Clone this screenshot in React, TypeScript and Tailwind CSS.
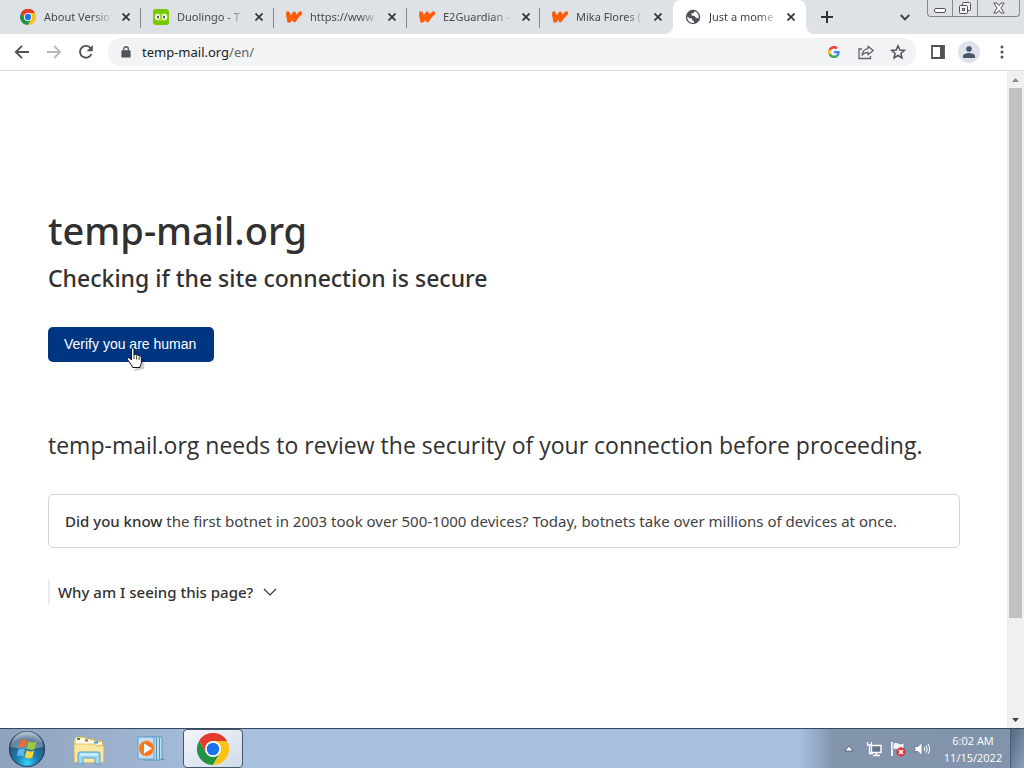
import React from "react";

const ui = "font-['Noto_Sans','Open_Sans',sans-serif]";

function ChromeLogo({ className }: { className: string }) {
  return (
    <svg viewBox="0 0 48 48" className={className} aria-hidden="true">
      <path d="M24 24 3.2 12A24 24 0 0 1 44.8 12Z" fill="#e33b2e" />
      <path d="M3.2 12A24 24 0 0 0 24 48L34.4 30 24 24 13.6 30Z" fill="#229342" />
      <path d="M44.8 12A24 24 0 0 1 24 48L34.4 30 24 12Z" fill="#fbc116" />
      <path d="M3.2 12A24 24 0 0 1 44.8 12H24L13.6 30Z" fill="#e33b2e" />
      <circle cx="24" cy="24" r="12" fill="#fff" />
      <circle cx="24" cy="24" r="9.4" fill="#1a73e8" />
    </svg>
  );
}

function DuoLogo() {
  return (
    <svg viewBox="0 0 16 16" className="size-4 shrink-0" aria-hidden="true">
      <rect width="16" height="16" rx="3" fill="#78c800" />
      <rect x="1" y="4" width="14" height="8" rx="4" fill="#8fdc1c" />
      <ellipse cx="4.6" cy="8" rx="2.5" ry="2.9" fill="#fff" />
      <ellipse cx="11.4" cy="8" rx="2.5" ry="2.9" fill="#fff" />
      <ellipse cx="5" cy="8" rx="1" ry="1.6" fill="#4b4b4b" />
      <ellipse cx="11" cy="8" rx="1" ry="1.6" fill="#4b4b4b" />
      <path d="M6.500 10h3L8 12Z" fill="#ffc200" />
    </svg>
  );
}

function WattpadLogo() {
  return (
    <svg viewBox="0 0 16 16" className="size-4 shrink-0" aria-hidden="true">
      <path d="M2 4.200 3 11.800 8.200 4.600 8.400 11.400Q11 6.800 14.300 4.200" fill="none" stroke="#ff5c0a" strokeWidth="3.800" strokeLinecap="round" strokeLinejoin="round" />
      <path d="M2.200 5.500 3.600 11" stroke="#ff5c0a" strokeWidth="4.200" strokeLinecap="round" />
    </svg>
  );
}

function GlobeLogo() {
  return (
    <svg viewBox="0 0 16 16" className="size-4 shrink-0" aria-hidden="true">
      <circle cx="8" cy="8" r="7.2" fill="#4d5156" />
      <path d="M2.2 7.4 4.5 9.2 7 9.6 7.4 11.6 9 12 8.6 14A6 6 0 0 1 2.2 7.4ZM9.5 2.2 8.6 4 6.4 4.6 6.6 6.6 9.6 7 11 8.8 13.6 9.4A6 6 0 0 0 9.5 2.2Z" fill="#fff" />
    </svg>
  );
}

const tabs: { title: string; icon: React.ReactNode; active?: boolean }[] = [
  { title: "About Versio", icon: <ChromeLogo className="size-4 shrink-0" /> },
  { title: "Duolingo - T", icon: <DuoLogo /> },
  { title: "https://www", icon: <WattpadLogo /> },
  { title: "E2Guardian -", icon: <WattpadLogo /> },
  { title: "Mika Flores (", icon: <WattpadLogo /> },
  { title: "Just a mome", icon: <GlobeLogo />, active: true },
];

function Tab({ title, icon, active, last }: { title: string; icon: React.ReactNode; active?: boolean; last: boolean }) {
  return (
    <div
      className={
        "relative flex w-[133px] shrink-0 items-center gap-2 pl-3 pr-[7px] " +
        (active ? "rounded-t-lg bg-white" : "")
      }
    >
      {icon}
      <span
        className={
          "flex-1 whitespace-nowrap text-[11px] [mask-image:linear-gradient(to_right,black_75%,transparent_105%)] " +
          (active ? "text-[#3c4043]" : "text-[#45494e]")
        }
      >
        {title}
      </span>
      <button type="button" aria-label="Close tab" className="flex size-4 shrink-0 items-center justify-center">
        <svg viewBox="0 0 8 8" className="size-2">
          <path d="M.5.5l7 7M7.5.5l-7 7" stroke="#2f3337" strokeWidth="1.7" />
        </svg>
      </button>
      {!active && !last && <span className="absolute right-0 top-2 h-5 w-px bg-[#80868b]" />}
      {active && (
        <>
          <svg viewBox="0 0 8 8" className="absolute -left-2 bottom-0 size-2" aria-hidden="true">
            <path d="M8 0v8H0A8 8 0 0 0 8 0Z" fill="#fff" />
          </svg>
          <svg viewBox="0 0 8 8" className="absolute -right-2 bottom-0 size-2" aria-hidden="true">
            <path d="M0 0v8h8A8 8 0 0 1 0 0Z" fill="#fff" />
          </svg>
        </>
      )}
    </div>
  );
}

function TabStrip() {
  return (
    <header className="flex h-[34px] shrink-0 bg-[#dee1e6] pl-2">
      {tabs.map((t, i) => (
        <Tab key={t.title} {...t} last={i === tabs.length - 2} />
      ))}
      <button type="button" aria-label="New tab" className="ml-[11px] flex w-5 items-center justify-center">
        <svg viewBox="0 0 12 12" className="size-3">
          <path d="M6 0v12M0 6h12" stroke="#2f3337" strokeWidth="2" />
        </svg>
      </button>
      <button type="button" aria-label="Search tabs" className="ml-auto mr-3 flex w-5 items-center justify-center">
        <svg viewBox="0 0 10 7" className="h-[7px] w-[10px]">
          <path d="M.8 1 5 5.3 9.200 1" fill="none" stroke="#3c4043" strokeWidth="1.9" />
        </svg>
      </button>
      <div className="mr-1 flex h-[17px] w-[93px] rounded-b border border-t-0 border-[#84888d] bg-[#dee1e6]">
        <button type="button" aria-label="Minimize" className="flex w-[25px] items-center justify-center border-r border-[#84888d]">
          <svg viewBox="0 0 12 12" className="size-3">
            <rect x=".5" y="6.500" width="11" height="4" rx="1.500" fill="#fff" stroke="#50545a" />
          </svg>
        </button>
        <button type="button" aria-label="Restore" className="flex w-[25px] items-center justify-center border-r border-[#84888d]">
          <svg viewBox="0 0 14 14" className="size-3.5" fill="#f1f2f4" stroke="#50545a">
            <rect x="4.500" y="1.500" width="8" height="8" rx="1" />
            <rect x="1.500" y="4.500" width="8" height="8" rx="1" />
            <rect x="4.500" y="7.500" width="2" height="2" />
          </svg>
        </button>
        <button type="button" aria-label="Close" className="flex flex-1 items-center justify-center">
          <svg viewBox="0 0 12 12" className="size-3">
            <path d="M.8 1H4L6 3.700 8 1h3.200L7.900 6l3.300 5H8L6 8.300 4 11H.8L4.100 6Z" fill="#fff" stroke="#50545a" />
          </svg>
        </button>
      </div>
    </header>
  );
}

function Toolbar() {
  return (
    <div className="flex h-[37px] shrink-0 items-center border-b border-[#d8dade] bg-white pl-3 pr-3">
      <div className="flex items-center gap-3">
        <button type="button" aria-label="Back" className="flex size-5 items-center justify-center">
          <svg viewBox="0 0 16 16" className="size-4">
            <path d="M15 8H2M8 1.800 1.800 8 8 14.200" fill="none" stroke="#505357" strokeWidth="1.900" />
          </svg>
        </button>
        <button type="button" aria-label="Forward" className="flex size-5 items-center justify-center">
          <svg viewBox="0 0 16 16" className="size-4">
            <path d="M1 8h13M8 1.800 14.200 8 8 14.200" fill="none" stroke="#b5b7ba" strokeWidth="1.900" />
          </svg>
        </button>
        <button type="button" aria-label="Reload" className="flex size-5 items-center justify-center">
          <svg viewBox="0 0 16 16" className="size-4">
            <path d="M13.400 10A5.900 5.900 0 1 1 12.600 4.200L13.500 5.500" fill="none" stroke="#505357" strokeWidth="1.900" />
            <path d="M14.800 1v6.200H8.600Z" fill="#505357" />
          </svg>
        </button>
      </div>
      <div className="ml-3 flex h-7 flex-1 items-center rounded-full bg-[#f1f3f4] pl-[13px] pr-[10px]">
        <svg viewBox="0 0 10 13" className="h-3 w-[10px]" aria-hidden="true">
          <rect x="0" y="4.500" width="10" height="8" rx="1" fill="#505357" />
          <path d="M2.500 5V3.300a2.500 2.500 0 0 1 5 0V5" fill="none" stroke="#505357" strokeWidth="1.400" />
        </svg>
        <p className="ml-[11px] flex-1 pt-px text-[13px] text-[#202124]">
          temp-mail.org<span className="text-[#5f6368]">/en/</span>
        </p>
        <div className="flex items-center gap-4">
          <button type="button" aria-label="Google" className="size-4">
            <svg viewBox="0 0 48 48" className="size-4 p-[2px]">
              <path fill="#4285f4" d="M46.500 24.500c0-1.600-.2-3.200-.4-4.700H24V29h12.700c-.6 3-2.300 5.500-4.800 7.100l7.700 6c4.500-4.200 6.900-10.300 6.900-17.600Z" />
              <path fill="#34a853" d="M24 48c6.500 0 11.900-2.100 15.600-5.900l-7.700-6c-2.100 1.500-4.900 2.300-7.900 2.300-6.300 0-11.600-4.200-13.500-9.900l-7.900 6.100C6.500 42.600 14.600 48 24 48Z" />
              <path fill="#fbbc05" d="M10.500 28.600a14.500 14.500 0 0 1 0-9.200l-7.900-6.100a24 24 0 0 0 0 21.500Z" />
              <path fill="#ea4335" d="M24 9.500c3.500 0 6.700 1.200 9.200 3.600l6.800-6.800C35.900 2.400 30.500 0 24 0 14.600 0 6.500 5.400 2.600 13.300l7.900 6.100C12.400 13.700 17.700 9.500 24 9.500Z" />
            </svg>
          </button>
          <button type="button" aria-label="Share" className="size-4">
            <svg viewBox="0 0 16 16" className="size-4" fill="none" stroke="#606368" strokeWidth="1.300">
              <path d="M4 5H1v9.500h11.500V12" />
              <path d="M10 2.200 15.200 6.500 10 10.800V8.300C7.500 8.300 5.500 9 4 11.200 4.400 7.600 6.500 5 10 4.600Z" strokeLinejoin="round" />
            </svg>
          </button>
          <button type="button" aria-label="Bookmark" className="size-4">
            <svg viewBox="0 0 16 16" className="size-4">
              <path d="M8 1.800 9.800 6l4.600.4-3.500 3L12 14 8 11.500 4 14l1.100-4.600-3.500-3L6.200 6Z" fill="none" stroke="#505357" strokeWidth="1.500" />
            </svg>
          </button>
        </div>
      </div>
      <div className="ml-3.5 flex items-center gap-3">
        <button type="button" aria-label="Side panel" className="flex size-4 items-center justify-center">
          <svg viewBox="0 0 14 14" className="size-3.5">
            <path d="M1 1h12v12H1Z" fill="none" stroke="#505357" strokeWidth="1.800" />
            <path d="M9 1h4v12H9Z" fill="#505357" />
          </svg>
        </button>
        <button type="button" aria-label="Profile" className="flex size-[22px] items-center justify-center rounded-full bg-[#dfe2ea]">
          <svg viewBox="0 0 12 12" className="size-3">
            <circle cx="6" cy="3" r="2.800" fill="#48566a" />
            <path d="M0 12V10C0 8 3.500 7 6 7s6 1 6 3v2Z" fill="#48566a" />
          </svg>
        </button>
        <button type="button" aria-label="Menu" className="flex size-5 items-center justify-center">
          <svg viewBox="0 0 4 14" className="h-3.5 w-1" fill="#505357">
            <circle cx="2" cy="2" r="1.500" />
            <circle cx="2" cy="7" r="1.500" />
            <circle cx="2" cy="12" r="1.500" />
          </svg>
        </button>
      </div>
    </div>
  );
}

function HandCursor() {
  return (
    <svg viewBox="0 0 20 25" className="absolute left-[78px] top-5 h-[25px] w-5" aria-hidden="true">
      <path d="M8 24 18 22 18.500 12 15 11Z" fill="#00000030" />
      <path
        d="M5.500 2c0-1.600 2.500-1.600 2.500 0v6c.8-1 2.400-.7 2.600.3.900-.6 2.200-.2 2.500.8 1-.4 2.300.2 2.300 1.600V15c0 2.500-1.400 3.500-1.400 5.500H6.500c0-2-3-4.500-5-8-.8-1.600 1-2.500 2.300-1.200L5.500 13Z"
        fill="#fff"
        stroke="#111"
      />
      <path d="M8 8v4M10.600 9v3.500M13.100 10v3" stroke="#111" strokeWidth=".8" />
    </svg>
  );
}

function Page() {
  return (
    <main className="min-w-0 flex-1 pl-12 pr-[47px] pt-[129px] text-[#313131]">
      <h1 className="text-[38px] font-medium leading-[60px]">temp-mail.org</h1>
      <h2 className="text-[23px] font-medium leading-9">Checking if the site connection is secure</h2>
      <div className="relative mt-[31px] w-fit">
        <button type="button" className="block h-[35px] rounded-[5px] bg-[#003681] pb-px pl-4 pr-[18px] font-['Liberation_Sans',Arial,sans-serif] text-sm text-white">
          Verify you are human
        </button>
        <HandCursor />
      </div>
      <p className="mt-[65px] font-['Open_Sans','Noto_Sans',sans-serif] text-[23px] leading-9">
        temp-mail.org needs to review the security of your connection before proceeding.
      </p>
      <p className="mt-[31px] rounded-[5px] border border-[#d5d5d5] p-4 text-[15px] leading-5 text-[#414141]">
        <span className="font-medium text-[#313131]">Did you know</span> the first botnet in 2003 took over 500-1000 devices? Today, botnets take over millions of devices at once.
      </p>
      <div className="mt-8 flex border-l-2 border-[#ebebeb] pl-2">
        <button type="button" className="flex items-center gap-2.5 text-[15px] font-medium leading-6">
          Why am I seeing this page?
          <svg viewBox="0 0 14 8" className="h-2 w-3.5" aria-hidden="true">
            <path d="M1 1l6 6 6-6" fill="none" stroke="#313131" strokeWidth="1.200" />
          </svg>
        </button>
      </div>
    </main>
  );
}

function Scrollbar() {
  return (
    <div className="flex w-[17px] shrink-0 flex-col bg-[#f0f0f0]" aria-hidden="true">
      <div className="flex h-[17px] items-center justify-center">
        <svg viewBox="0 0 7 4" className="h-1 w-[7px]"><path d="M0 4h7L3.500 0Z" fill="#8c8c8c" /></svg>
      </div>
      <div className="flex-1 px-0.5">
        <div className="h-[530px] bg-[#c1c1c1]" />
      </div>
      <div className="flex h-[17px] items-center justify-center">
        <svg viewBox="0 0 7 4" className="h-1 w-[7px]"><path d="M0 0h7L3.500 4Z" fill="#404040" /></svg>
      </div>
    </div>
  );
}

function StartOrb() {
  return (
    <svg viewBox="0 0 38 38" className="size-[38px]" aria-hidden="true">
      <defs>
        <radialGradient id="orb" cx=".5" cy=".9" r=".9">
          <stop offset="0" stopColor="#35d3f5" />
          <stop offset=".35" stopColor="#1b7fb0" />
          <stop offset=".75" stopColor="#2c5378" />
          <stop offset="1" stopColor="#a9bac9" />
        </radialGradient>
      </defs>
      <circle cx="19" cy="19" r="17.500" fill="url(#orb)" stroke="#25435f" strokeWidth="1.200" />
      <path d="M3 17A16 16 0 0 1 35 17Q19 21 3 17Z" fill="#ffffff48" />
      <path d="M12.500 11Q16 8.500 19 10.500L17.400 18Q14 16 10.700 18Z" fill="#ef6a32" />
      <path d="M20.500 11.200Q25 13.500 28.500 11.500L26.600 19Q23 21 18.900 18.600Z" fill="#9bca3c" />
      <path d="M10.300 19.500Q13.500 17.800 17 19.500L15.300 26.500Q12 24.500 8.800 26.500Z" fill="#62b6ea" />
      <path d="M18.500 20.200Q22.500 22.500 26.200 20.600L24.400 27.500Q20.500 29.500 16.800 27.300Z" fill="#fbd33f" />
    </svg>
  );
}

function FolderIcon() {
  return (
    <svg viewBox="0 0 34 30" className="h-[30px] w-[34px]" aria-hidden="true">
      <path d="M2 4 4 1h9l2 2h7l1 2h7l1 3v18H2Z" fill="#f0dc8e" stroke="#c9b05c" strokeWidth=".8" />
      <path d="M4 2h8v1.500h6V5h6v1.500h6v2H4Z" fill="#fffdf0" />
      <path d="M5 2h3v2H5Z" fill="#3a9d45" />
      <path d="M13 3.500h3v2h-3Z" fill="#d4553a" />
      <path d="M22 5.500h4v2h-4Z" fill="#4a93cf" />
      <path d="M2 8h20l2 2h8l-.5 16.500h-29Z" fill="#f8e9a2" stroke="#d3b963" strokeWidth=".8" />
      <path d="M6 28V18q0-2 2-2h18q2 0 2 2v10h-5v-6H11v6Z" fill="#9fd7f2" stroke="#5a9fc9" />
      <path d="M8 18.500h18" stroke="#e4f7ff" strokeWidth="1.500" />
    </svg>
  );
}

function MediaIcon() {
  return (
    <svg viewBox="0 0 28 26" className="h-[26px] w-7" aria-hidden="true">
      <path d="M20 24h8l-3-3Z" fill="#6f93b8" />
      <path d="M7 1h18v21l-2 2H7Z" fill="#b9ddf1" stroke="#5b9ac4" />
      <path d="M22.500 1.500v22M19.500 1.500v22" stroke="#4f92bf" />
      <path d="M1 1h16v22H1Z" fill="#c3e1f2" stroke="#5a9cc6" />
      <circle cx="9.500" cy="12.500" r="7.800" fill="#ee7a22" stroke="#f7b57c" />
      <path d="M7 7.500v10l8-5Z" fill="#fff" />
    </svg>
  );
}

function Taskbar() {
  return (
    <footer className="flex h-10 shrink-0 items-stretch border-t border-[#37485c] bg-linear-to-r from-[#8fa2bd] from-0% via-[#a7c0de] via-22% to-[#a7c0de] to-72%">
      <button type="button" aria-label="Start" className="ml-2 flex items-center"><StartOrb /></button>
      <button type="button" aria-label="Windows Explorer" className="ml-[26px] flex items-center pt-1"><FolderIcon /></button>
      <button type="button" aria-label="Media Player" className="ml-[31px] flex items-center"><MediaIcon /></button>
      <button type="button" aria-label="Google Chrome" className="ml-[18px] flex w-[60px] items-center justify-center rounded-sm border border-[#48586c] bg-linear-to-br from-[#f4f6f9] to-[#d0dbea]">
        <ChromeLogo className="size-8" />
      </button>
      <div className="ml-auto flex items-center gap-2 bg-linear-to-r from-[#a7c0de] from-0% via-[#8395ad] via-16% to-[#8194ac] pl-[44px] text-white">
        <button type="button" aria-label="Show hidden icons" className="mr-1 flex h-4 items-center">
          <svg viewBox="0 0 10 7" className="h-[7px] w-[10px]"><path d="M.8 6h8.400L5 1Z" fill="#fff" stroke="#44566f" strokeWidth=".8" /></svg>
        </button>
        <svg viewBox="0 0 16 16" className="size-4" aria-label="Network">
          <path d="M5.500 4.500H15v7H5.500Z" fill="#63758c" stroke="#fff" strokeWidth="1.400" />
          <path d="M7 14.500h7M10.300 11v3" stroke="#fff" strokeWidth="1.400" />
          <path d="M1.500 1v3h4V1M3.500 4v8.500H7M1 4h5" fill="none" stroke="#fff" strokeWidth="1.300" />
        </svg>
        <svg viewBox="0 0 16 16" className="size-4" aria-label="Action Center">
          <path d="M2 1v14" stroke="#fff" strokeWidth="1.800" />
          <path d="M3 2q3-1.500 5 0t6 0v7q-3 1.500-6 0T3 9Z" fill="#eef2f6" stroke="#596a7e" strokeWidth=".6" />
          <circle cx="11" cy="11" r="4.700" fill="#d63a40" />
          <path d="m9 9 4 4m0-4-4 4" stroke="#fff" strokeWidth="1.500" />
        </svg>
        <svg viewBox="0 0 16 16" className="size-4" aria-label="Volume">
          <path d="M1 5.500h3L8 1.500v13L4 10.500H1Z" fill="#fff" stroke="#506278" strokeWidth=".6" />
          <path d="M10 6q1.500 2 0 4M12 4.500q2.500 3.500 0 7M14 3q3.200 5 0 10" fill="none" stroke="#fff" />
        </svg>
        <div className="ml-1 mr-1.5 w-[62px] text-center font-['Open_Sans','Noto_Sans',sans-serif] text-[11px] leading-[17px]">
          <p>6:02 AM</p>
          <p>11/15/2022</p>
        </div>
      </div>
      <button type="button" aria-label="Show desktop" className="w-[14px] border-l border-[#4d5e74] bg-linear-to-br from-[#546780] to-[#8ca0b9]" />
    </footer>
  );
}

export default function App() {
  return (
    <div className={"flex min-h-screen flex-col bg-white " + ui}>
      <TabStrip />
      <Toolbar />
      <div className="flex flex-1">
        <Page />
        <Scrollbar />
      </div>
      <Taskbar />
    </div>
  );
}
